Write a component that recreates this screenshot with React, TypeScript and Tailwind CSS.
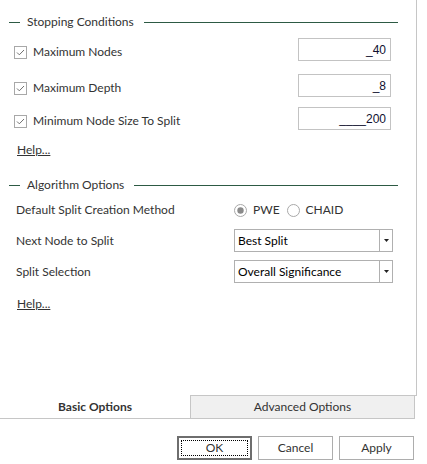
import React from "react";

const LINE = "bg-[#2d5a44]";

function Check() {
  return (
    <svg width="13" height="13" viewBox="0 0 13 13" className="shrink-0">
      <rect x="0.5" y="0.5" width="12" height="12" fill="#fff" stroke="#a8a8a8" />
      <path d="M3 6.5 L5.3 8.8 L10 4" fill="none" stroke="#707070" strokeWidth="1" />
    </svg>
  );
}

function Radio({ on }: { on?: boolean }) {
  return (
    <svg width="13" height="13" viewBox="0 0 13 13" className="shrink-0">
      <circle cx="6.5" cy="6.5" r="6" fill="#fff" stroke="#a8a8a8" />
      {on && <circle cx="6.5" cy="6.5" r="3.2" fill="#8a8a8a" />}
    </svg>
  );
}

function Header({ title }: { title: string }) {
  return (
    <div className="h-[16px] flex items-center">
      <div className={`ml-[9px] w-[11px] h-px ${LINE}`} />
      <span className="ml-[7px] text-[#333]">{title}</span>
      <div className={`ml-[10px] mr-[18px] flex-1 h-px ${LINE}`} />
    </div>
  );
}

function CheckRow({ label, value, className }: { label: string; value: string; className: string }) {
  return (
    <div className={`h-[23px] flex items-center ${className}`}>
      <div className="flex items-center mt-[5px] ml-[14px]">
        <Check />
        <span className="ml-[6px]">{label}</span>
      </div>
      <div className="ml-auto mr-[25px] w-[93px] h-[23px] border border-[#c3c3c3] flex items-center justify-end pr-[4px] font-['Liberation_Sans'] text-[12px] text-[#101030]">
        {value}
      </div>
    </div>
  );
}

function Select({ value }: { value: string }) {
  return (
    <div className="w-[159px] h-[23px] border border-[#b0b0b0] flex">
      <div className="flex-1 flex items-center pl-[3px] text-black">{value}</div>
      <div className="w-[13px] border-l border-[#b0b0b0] flex items-center justify-center">
        <svg width="5" height="3" viewBox="0 0 5 3">
          <path d="M0 0 H5 L2.5 3 Z" fill="#222" />
        </svg>
      </div>
    </div>
  );
}

export default function App() {
  return (
    <div className="w-[427px] h-[464px] bg-white font-['Lato'] text-[12px] text-[#333] flex flex-col">
      <div className="w-[417px] h-[395px] border-r border-[#c6c6c6] flex flex-col">
        <div className="mt-[14px]">
          <Header title="Stopping Conditions" />
        </div>
        <CheckRow className="mt-[8px]" label="Maximum Nodes" value="_40" />
        <CheckRow className="mt-[13px]" label="Maximum Depth" value="_8" />
        <CheckRow className="mt-[10px]" label="Minimum Node Size To Split" value="____200" />
        <div className="mt-[12px] h-[16px] ml-[17px] flex items-center">
          <span className="underline">Help...</span>
        </div>
        <div className="mt-[19px]">
          <Header title="Algorithm Options" />
        </div>
        <div className="mt-[7px] h-[20px] flex items-center">
          <div className="w-[234px] pl-[16px]">Default Split Creation Method</div>
          <div className="flex items-center">
            <Radio on />
            <span className="ml-[6px]">PWE</span>
            <span className="ml-[7px]">
              <Radio />
            </span>
            <span className="ml-[6px]">CHAID</span>
          </div>
        </div>
        <div className="mt-[9px] h-[23px] flex items-center">
          <div className="w-[234px] pl-[16px]">Next Node to Split</div>
          <Select value="Best Split" />
        </div>
        <div className="mt-[8px] h-[23px] flex items-center">
          <div className="w-[234px] pl-[16px]">Split Selection</div>
          <Select value="Overall Significance" />
        </div>
        <div className="mt-[13px] h-[16px] ml-[17px] flex items-center">
          <span className="underline">Help...</span>
        </div>
      </div>
      <div className="h-[24px] flex">
        <div className="w-[190px] h-full border-b border-[#c6c6c6] flex items-center justify-center font-bold text-[#333]">
          Basic Options
        </div>
        <div className="w-[227px] h-full border-t border-[#c6c6c6]">
          <div className="w-[225px] h-full bg-[#f0f0f0] border-l border-r border-b border-[#c6c6c6] flex items-center justify-center">
            Advanced Options
          </div>
        </div>
      </div>
      <div className="mt-[17px] flex justify-end gap-[6px] pr-[13px]">
        <button className="w-[75px] h-[24px] border-2 border-[#6e6e6e] bg-white outline-1 outline-dotted outline-black outline-offset-[-5px] text-[#333]">
          OK
        </button>
        <button className="w-[75px] h-[24px] border border-[#adadad] bg-white text-[#333]">Cancel</button>
        <button className="w-[75px] h-[24px] border border-[#adadad] bg-white text-[#333]">Apply</button>
      </div>
    </div>
  );
}
